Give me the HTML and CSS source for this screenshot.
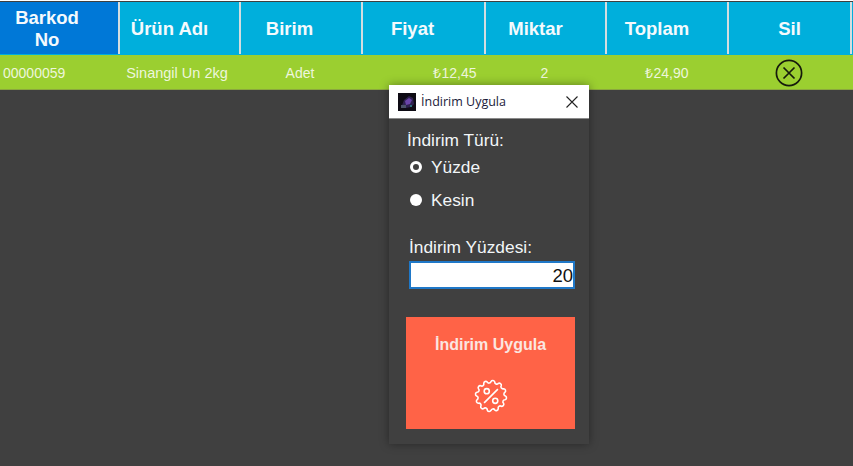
FILE: index.html
```html
<!DOCTYPE html>
<html lang="tr">
<head>
<meta charset="utf-8">
<title>İndirim Uygula</title>
<link rel="stylesheet" href="styles.css">
</head>
<body>
<main class="app">
  <div class="table-head">
    <div class="hcell h-barkod active">Barkod<br>No</div>
    <div class="hcell h-ad">Ürün Adı</div>
    <div class="hcell h-birim">Birim</div>
    <div class="hcell h-fiyat">Fiyat</div>
    <div class="hcell h-miktar">Miktar</div>
    <div class="hcell h-toplam">Toplam</div>
    <div class="hcell">Sil</div>
  </div>
  <div class="table-row">
    <div class="cell c-barkod">00000059</div>
    <div class="cell c-ad">Sinangil Un 2kg</div>
    <div class="cell c-birim">Adet</div>
    <div class="cell c-fiyat">₺12,45</div>
    <div class="cell c-miktar">2</div>
    <div class="cell c-toplam">₺24,90</div>
    <div class="cell c-sil">
      <svg class="del-icon" viewBox="0 0 28 28" aria-label="Sil">
        <circle cx="14" cy="14" r="12.6"/>
        <path d="M8.5 8.5 19.5 19.5M19.5 8.5 8.5 19.5"/>
      </svg>
    </div>
  </div>
  <section class="dialog">
    <header class="titlebar">
      <svg class="app-icon" viewBox="0 0 18 18" aria-hidden="true">
        <rect width="18" height="18" fill="#0e0b14"/>
        <path d="M3 15 6 7l5-4 4 2 1 6-3 3-5 1z" fill="#2f2250"/>
        <path d="M7 8l4-3 3 2-2 4-4 1z" fill="#6a44a8"/>
        <path d="M3 12h5v3H3z" fill="#4a5268"/>
        <path d="M12 12h2v2h-2z" fill="#2f7280"/>
      </svg>
      <span class="title">İndirim Uygula</span>
      <svg class="close" viewBox="0 0 12 12" aria-label="Kapat">
        <path d="M.5.5l11 11M11.5.5l-11 11"/>
      </svg>
    </header>
    <div class="body">
      <div class="label">İndirim Türü:</div>
      <div class="radio-line first"><span class="radio on"></span><span>Yüzde</span></div>
      <div class="radio-line"><span class="radio"></span><span>Kesin</span></div>
      <div class="label percent">İndirim Yüzdesi:</div>
      <div class="input">20</div>
      <div class="apply">
        <span>İndirim Uygula</span>
        <svg class="badge" viewBox="0 0 32 32" aria-hidden="true">
          <path d="M29.6 16A1.9 1.9 0 0 1 29.14 19.52A1.9 1.9 0 0 0 27.78 22.8A1.9 1.9 0 0 1 25.62 25.62A1.9 1.9 0 0 0 22.8 27.78A1.9 1.9 0 0 1 19.52 29.14A1.9 1.9 0 0 0 16 29.6A1.9 1.9 0 0 1 12.48 29.14A1.9 1.9 0 0 0 9.2 27.78A1.9 1.9 0 0 1 6.38 25.62A1.9 1.9 0 0 0 4.22 22.8A1.9 1.9 0 0 1 2.86 19.52A1.9 1.9 0 0 0 2.4 16A1.9 1.9 0 0 1 2.86 12.48A1.9 1.9 0 0 0 4.22 9.2A1.9 1.9 0 0 1 6.38 6.38A1.9 1.9 0 0 0 9.2 4.22A1.9 1.9 0 0 1 12.48 2.86A1.9 1.9 0 0 0 16 2.4A1.9 1.9 0 0 1 19.52 2.86A1.9 1.9 0 0 0 22.8 4.22A1.9 1.9 0 0 1 25.62 6.38A1.9 1.9 0 0 0 27.78 9.2A1.9 1.9 0 0 1 29.14 12.48A1.9 1.9 0 0 0 29.6 16Z"/>
          <path d="M9.5 22.5 22.5 9.5"/>
          <circle cx="12" cy="11.5" r="2.4"/>
          <circle cx="20" cy="20.5" r="2.4"/>
        </svg>
      </div>
    </div>
  </section>
</main>
</body>
</html>
```
FILE: styles.css
```css
* { box-sizing: border-box; }
html, body { margin: 0; height: 100%; overflow: hidden; }
body { background: #404040; font-family: "Liberation Sans", Arial, sans-serif; }
.app { position: relative; width: 853px; height: 466px; padding-top: 1px; background: #404040; border-top: 1px solid #fff; }
.table-head, .table-row {
  display: grid;
  grid-template-columns: 120px 121px 122px 123px 121px 122px 123px 1fr;
}
.table-head { height: 53px; background: #00afdc; }
.hcell {
  display: flex; align-items: center; justify-content: center;
  padding-top: 2px;
  text-align: center;
  font-size: 18.5px; font-weight: 700; line-height: 22px; color: #f4fafd;
  border-right: 2px solid #d4dde0;
  margin-bottom: 1px;
}
.hcell.active { background: #0078d7; }
.h-barkod { padding-right: 24px; }
.h-ad { padding-right: 20px; }
.h-birim { padding-right: 23px; }
.h-fiyat { padding-right: 22px; }
.h-miktar { padding-right: 20px; }
.h-toplam { padding-right: 20px; }
.table-row { height: 35px; background: #9bcf30; border-bottom: 1px solid #8ba83e; }
.cell {
  display: flex; align-items: center; justify-content: center;
  padding-top: 1px;
  font-size: 14px; color: #eef6dc;
}
.c-barkod { justify-content: flex-start; padding-left: 3px; }
.c-ad { padding-right: 7px; font-size: 14.5px; }
.c-birim { padding-right: 4px; }
.c-fiyat { padding-left: 61px; }
.c-miktar { padding-right: 4px; }
.c-toplam { padding-right: 2px; }
.c-sil { padding-right: 4px; }
.del-icon { width: 28px; height: 28px; fill: none; stroke: #161a0c; stroke-width: 1.7; }
.dialog {
  position: absolute; left: 389px; top: 84px;
  width: 200px; height: 359px;
  background: #404040;
  box-shadow: 0 0 9px rgba(0,0,0,.4);
  color: #f2f6f8;
}
.titlebar {
  display: flex; align-items: center;
  height: 34px; padding: 0 11px 0 9px;
  background: #fff; border-bottom: 1px solid #8a8a8a;
}
.app-icon { width: 18px; height: 18px; margin-right: 5px; }
.title { flex: 1; font: 12.5px "Open Sans", sans-serif; color: #1a1a3a; }
.close { width: 12px; height: 12px; fill: none; stroke: #222; stroke-width: 1.1; }
.body { padding: 11px 14px 0 17px; font-size: 17.33px; }
.label { line-height: 20px; height: 20px; margin-left: 1px; }
.radio-line { display: flex; align-items: center; height: 20px; gap: 9px; margin-top: 13px; padding-left: 4px; }
.radio-line.first { margin-top: 7px; }
.radio { width: 12px; height: 12px; border-radius: 50%; background: #fff; }
.radio.on { background: #404040; border: 3px solid #fff; }
.percent { margin: 27px 0 4px 3px; }
.input {
  height: 28px; margin-left: 3px; padding-right: 0;
  background: #fff; border: 2px solid #1f78c8;
  color: #111; font-size: 18.5px; line-height: 25px; text-align: right;
}
.apply {
  display: flex; flex-direction: column; align-items: center;
  height: 112px; margin-top: 28px; padding-top: 19px;
  background: #ff6347; color: #fbe6e0;
  font-size: 16px; font-weight: 700; line-height: 18px;
}
.badge { width: 34px; height: 34px; margin-top: 25px; fill: none; stroke: #fff; stroke-width: 1.5; flex: none; }
```
